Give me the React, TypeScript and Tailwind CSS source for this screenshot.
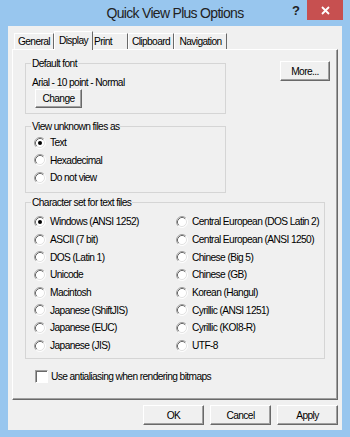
import React from "react";

const FONT = "font-['Liberation_Sans',Arial,sans-serif]";

function RadioIcon({ checked }: { checked?: boolean }) {
  return (
    <svg width="12" height="12" viewBox="0 0 12 12" className="shrink-0">
      <circle cx="6" cy="6" r="5" fill="#ffffff" />
      <path d="M2.11 9.89 A5.5 5.5 0 0 1 9.89 2.11" fill="none" stroke="#a0a0a0" strokeWidth="1" />
      <path d="M9.89 2.11 A5.5 5.5 0 0 1 2.11 9.89" fill="none" stroke="#ffffff" strokeWidth="1" />
      <path d="M2.82 9.18 A4.5 4.5 0 0 1 9.18 2.82" fill="none" stroke="#696969" strokeWidth="1" />
      <path d="M9.18 2.82 A4.5 4.5 0 0 1 2.82 9.18" fill="none" stroke="#e3e3e3" strokeWidth="1" />
      {checked && <circle cx="6" cy="6" r="2" fill="#000000" />}
    </svg>
  );
}

function Radio({ label, checked, h = "h-[17.5px]" }: { label: string; checked?: boolean; h?: string }) {
  return (
    <div className={`flex items-center gap-[4px] ${h}`}>
      <RadioIcon checked={checked} />
      <span className="whitespace-nowrap">{label}</span>
    </div>
  );
}

function Button({ label, w, h = "h-[20px]" }: { label: string; w: string; h?: string }) {
  return (
    <div
      className={`${w} ${h} flex items-center justify-center bg-[#f0f0f0] border border-t-white border-l-white border-r-[#696969] border-b-[#696969] shadow-[inset_-1px_-1px_0_#a0a0a0] text-black`}
    >
      {label}
    </div>
  );
}

function Group({ label, className, children }: { label: string; className: string; children: React.ReactNode }) {
  return (
    <div className={`relative border border-[#d5d5d5] ${className}`}>
      <span className="absolute -top-[7px] left-[5px] bg-[#f0f0f0] px-[1px] leading-[13px] whitespace-nowrap">
        {label}
      </span>
      {children}
    </div>
  );
}

export default function App() {
  const leftCol = [
    "Windows (ANSI 1252)",
    "ASCII (7 bit)",
    "DOS (Latin 1)",
    "Unicode",
    "Macintosh",
    "Japanese (ShiftJIS)",
    "Japanese (EUC)",
    "Japanese (JIS)",
  ];
  const rightCol = [
    "Central European (DOS Latin 2)",
    "Central European (ANSI 1250)",
    "Chinese (Big 5)",
    "Chinese (GB)",
    "Korean (Hangul)",
    "Cyrillic (ANSI 1251)",
    "Cyrillic (KOI8-R)",
    "UTF-8",
  ];

  return (
    <div className={`w-[350px] h-[437px] bg-[#98c6ee] flex flex-col ${FONT} text-[10.2px] tracking-[-0.6px] leading-[13px] text-black overflow-hidden`}>
      {/* Title bar */}
      <div className="relative h-[26px] shrink-0 flex items-center justify-center">
        <span className="text-[14px] tracking-[-0.7px] text-[#222]">
          Quick View Plus Options
        </span>
        <span className="absolute left-[292px] top-[4px] font-bold text-[13px] tracking-normal text-[#222]">
          ?
        </span>
        <div className="absolute right-[7px] top-0 w-[36px] h-[20px] bg-[#c75050] flex items-center justify-center">
          <svg width="9" height="9" viewBox="0 0 9 9">
            <path d="M1 1 L8 8 M8 1 L1 8" stroke="#ffffff" strokeWidth="1.8" />
          </svg>
        </div>
      </div>

      {/* Client area */}
      <div className="mx-[8px] mb-[7px] flex-1 bg-[#f0f0f0] px-[4px] pt-[5px] flex flex-col">
        {/* Tabs */}
        <div className="flex items-end pl-[2px] h-[19px] -mb-[1px] relative z-10">
          <div className="w-[40px] h-[16px] mb-[1px] border-t border-l border-white border-r border-r-[#696969] flex items-center justify-center">
            General
          </div>
          <div className="w-[39px] h-[19px] border-t border-l border-white border-r border-r-[#696969] bg-[#f0f0f0] flex items-start pt-[2px] justify-center">
            Display
          </div>
          <div className="w-[35px] h-[16px] mb-[1px] border-t border-white border-r border-r-[#696969] flex items-center pl-[1px]">
            Print
          </div>
          <div className="w-[46px] h-[16px] mb-[1px] border-t border-l border-white border-r border-r-[#696969] flex items-center justify-center">
            Clipboard
          </div>
          <div className="w-[53px] h-[16px] mb-[1px] border-t border-l border-white border-r border-r-[#696969] flex items-center justify-center">
            Navigation
          </div>
        </div>

        {/* Panel */}
        <div className="h-[351px] shrink-0 border border-t-white border-l-white border-r-[#696969] border-b-[#696969] shadow-[inset_-1px_-1px_0_#a0a0a0] flex flex-col">
          <div className="flex items-start">
            <Group label="Default font" className="ml-[12px] mt-[13px] w-[201px] h-[51px] pt-[12px] pl-[6px]">
              <div className="leading-[13px]">Arial - 10 point - Normal</div>
              <div className="ml-[3px]">
                <Button label="Change" w="w-[47px]" h="h-[19px]" />
              </div>
            </Group>
            <div className="ml-[54px] mt-[11px]">
              <Button label="More..." w="w-[50px]" h="h-[20px]" />
            </div>
          </div>

          <Group label="View unknown files as" className="ml-[12px] mt-[12px] w-[201px] h-[67px] pt-[7px] pl-[8px]">
            <Radio label="Text" checked />
            <Radio label="Hexadecimal" />
            <Radio label="Do not view" />
          </Group>

          <Group label="Character set for text files" className="ml-[12px] mt-[9px] w-[300px] h-[157px] pt-[10px] pl-[8px]">
            <div className="flex">
              <div className="w-[142px] flex flex-col">
                {leftCol.map((l, i) => (
                  <Radio key={l} label={l} checked={i === 0} h="h-[17.7px]" />
                ))}
              </div>
              <div className="flex flex-col">
                {rightCol.map((l) => (
                  <Radio key={l} label={l} h="h-[17.7px]" />
                ))}
              </div>
            </div>
          </Group>

          <div className="ml-[22px] mt-[11px] flex items-center gap-[2px] h-[13px]">
            <div className="w-[13px] h-[13px] bg-white border border-t-[#a0a0a0] border-l-[#a0a0a0] border-r-white border-b-white shadow-[inset_1px_1px_0_#696969]" />
            <span className="ml-[1px]">Use antialiasing when rendering bitmaps</span>
          </div>
        </div>

        {/* Bottom buttons */}
        <div className="mt-[5px] flex justify-end gap-[6px]">
          <Button label="OK" w="w-[61px]" h="h-[20px]" />
          <Button label="Cancel" w="w-[61px]" h="h-[20px]" />
          <Button label="Apply" w="w-[61px]" h="h-[20px]" />
        </div>
      </div>
    </div>
  );
}
